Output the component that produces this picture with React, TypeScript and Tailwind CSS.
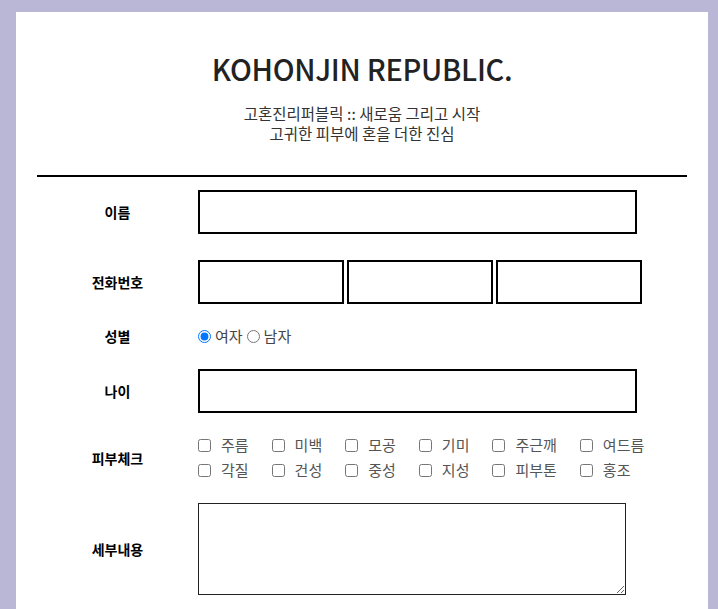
import React from "react";

const font = { fontFamily: '"Noto Sans CJK KR", "Noto Sans", sans-serif' };

function Label({ children }: { children: React.ReactNode }) {
  return (
    <div className="w-[161px] shrink-0 text-center text-[14px] font-bold text-black">
      {children}
    </div>
  );
}

const skins = [
  ["주름", "미백", "모공", "기미", "주근깨", "여드름"],
  ["각질", "건성", "중성", "지성", "피부톤", "홍조"],
];

export default function App() {
  return (
    <div
      className="min-h-[609px] w-full bg-[#b9b7d5] pt-[12px] pl-[16px] pr-[10px] overflow-hidden"
      style={font}
    >
      <div className="h-[620px] w-[692px] bg-white px-[21px]">
        <div className="pt-[36px] text-center">
          <h1 className="text-[29px] leading-[40px] text-[#222] font-medium tracking-[-0.3px]">
            KOHONJIN REPUBLIC.
          </h1>
          <div className="mt-[15px] text-[15.5px] text-[#333]">
            <div className="h-[20px] leading-[20px]">고혼진리퍼블릭 :: 새로움 그리고 시작</div>
            <div className="h-[20px] leading-[20px]">고귀한 피부에 혼을 더한 진심</div>
          </div>
        </div>
        <div className="mt-[32px] h-[2px] bg-black" />

        <div className="mt-[13px] flex h-[44px] items-center">
          <Label>이름</Label>
          <input type="text" className="h-[44px] w-[439px] border-2 border-black outline-none" />
        </div>

        <div className="mt-[26px] flex h-[44px] items-center">
          <Label>전화번호</Label>
          <div className="flex gap-[3px]">
            <input type="text" className="h-[44px] w-[146px] border-2 border-black outline-none" />
            <input type="text" className="h-[44px] w-[146px] border-2 border-black outline-none" />
            <input type="text" className="h-[44px] w-[146px] border-2 border-black outline-none" />
          </div>
        </div>

        <div className="flex h-[65px] items-center">
          <Label>성별</Label>
          <div className="flex items-center text-[15px] text-[#444]">
            <input type="radio" name="g" defaultChecked className="m-0 mr-[4px] h-[13px] w-[13px]" />
            <span>여자</span>
            <input type="radio" name="g" className="m-0 ml-[4px] mr-[4px] h-[13px] w-[13px]" />
            <span>남자</span>
          </div>
        </div>

        <div className="flex h-[44px] items-center">
          <Label>나이</Label>
          <input type="text" className="h-[44px] w-[439px] border-2 border-black outline-none" />
        </div>

        <div className="flex h-[90px] items-center">
          <Label>피부체크</Label>
          <div className="grid grid-cols-[repeat(6,auto)] gap-x-[23px] gap-y-[3px] text-[15px] text-[#555]">
            {skins.flat().map((s) => (
              <label key={s} className="flex h-[22px] items-center">
                <input type="checkbox" className="m-0 mr-[10px] h-[13px] w-[13px]" />
                <span>{s}</span>
              </label>
            ))}
          </div>
        </div>

        <div className="flex h-[92px] items-center">
          <Label>세부내용</Label>
          <textarea className="h-[92px] w-[428px] border border-[#222] outline-none" />
        </div>
      </div>
    </div>
  );
}
